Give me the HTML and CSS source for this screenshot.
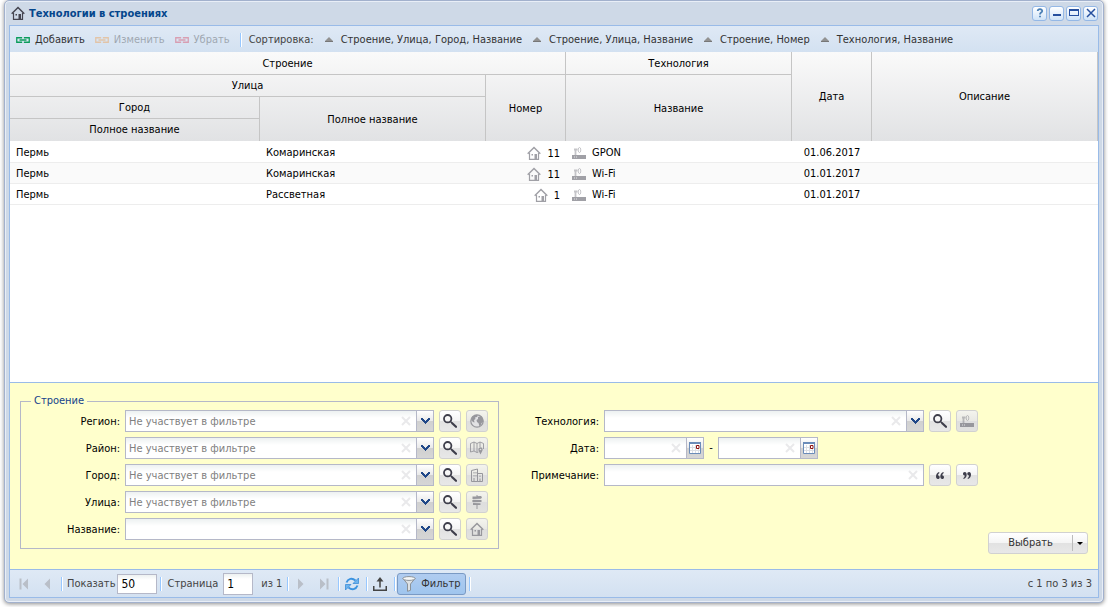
FILE: index.html
```html
<!DOCTYPE html>
<html lang="ru">
<head>
<meta charset="utf-8">
<title>Технологии в строениях</title>
<link rel="stylesheet" href="styles.css">
</head>
<body>
<svg class="sprite" aria-hidden="true">
  <symbol id="house" viewBox="0 0 14 14"><path d="M.7 7.700 7 1.500l6.300 6.200" fill="none" stroke="currentColor" stroke-width="1.500"/><path d="M2.500 7v6.400h9V7" fill="none" stroke="currentColor" stroke-width="1.200"/><path d="M7.500 8h2.500v5H7.500zM4.500 8H6v1.500H4.500z" fill="currentColor"/></symbol>
  <symbol id="link" viewBox="0 0 14 6"><path d="M5.500 1.500V.750H.750v4.500H5.500V4.500M8.500 1.500V.750h4.750v4.500H8.500V4.500M3.500 3h7" fill="none" stroke="currentColor" stroke-width="1.300"/></symbol>
  <symbol id="router" viewBox="0 0 14 12"><path d="M0 8h14v4H0z" fill="currentColor"/><path d="M2 2.500h3.500M3.500 2.500V8" stroke="currentColor" stroke-width="1.800" opacity=".6"/><ellipse cx="7.500" cy="3" rx="1.300" ry="2.500" fill="none" stroke="currentColor" opacity=".6"/><path d="M2 10h1M4 10h1" stroke="#fff" opacity=".7"/></symbol>
  <symbol id="search" viewBox="0 0 14 14"><circle cx="4.700" cy="4.700" r="3.700" fill="none" stroke="currentColor" stroke-width="1.800"/><path d="m7.500 7.500 2 2" stroke="currentColor" stroke-width="1.500"/><path d="m9.500 9.500 3.500 3.300" stroke="currentColor" stroke-width="2.200" stroke-linecap="round"/></symbol>
  <symbol id="globe" viewBox="0 0 14 14"><circle cx="7" cy="7" r="6.200" fill="#e2e2e4" stroke="currentColor" stroke-width="1.200"/><path d="M1 6 2.500 2.500 6 .800l2 .700L7 3 5 3.500 5.500 5 4 6l.500 2.500L3 8zM8 3l3-1 2 3 .300 3-1.800 1-.5 2-1.500 1.500L8.500 9 7 8l-.5-2L8 5z" fill="currentColor"/></symbol>
  <symbol id="map" viewBox="0 0 14 14"><path d="M.500 2.500 4 1l3 1.500L10 1l3.500 1.500V8M.500 2.500V11L4 10l3 1.500 1.500-.5M4 1v9M7 2.500v9M10 1v5" fill="none" stroke="currentColor" stroke-width=".9"/><circle cx="10.500" cy="8.500" r="1.500" fill="none" stroke="currentColor" stroke-width="1.300"/><path d="M8.500 9.500h4l-2 4z" fill="currentColor"/></symbol>
  <symbol id="city" viewBox="0 0 14 14"><path d="M1.500 13.500V2.500L7.500 1v12.500zM7.500 5.500h5v8h-5z" fill="none" stroke="currentColor"/><path d="M3.500 4h1v1.500h-1zM5.500 4h1v1.500h-1zM3.500 7h1v1.500h-1zM5.500 7h1v1.500h-1zM3.500 10h1v3.500h-1zM9.500 7.500h1V9h-1zM9.500 10.500h1v3h-1z" fill="currentColor"/></symbol>
  <symbol id="signpost" viewBox="0 0 14 14"><path d="M6.500 0h1v1.500h-1zM6.500 9.500h1V14h-1zM2.500 1.500 11 1l1 1.200-1 1.500-8.500.300zM3 4.800l8.500.200v2L3 7.300 2 6zM3 8l7 .200 1 .900-1 1H3z" fill="currentColor"/></symbol>
  <symbol id="cross" viewBox="0 0 10 10"><path d="m1 1 8 8m0-8-8 8" stroke="currentColor" stroke-width="2"/></symbol>
  <symbol id="chevron" viewBox="0 0 9 6"><path d="M0 0h2v1h1v1h1v1h1V2h1V1h1V0h2v2H8v1H7v1H6v1H5v1H4V5H3V4H2V3H1V2H0z" fill="currentColor"/></symbol>
  <symbol id="calendar" viewBox="0 0 12 12"><path d="M.500.500h11v11H.500z" fill="#fff" stroke="#6b8cb9"/><path d="M0 0h12v2H0z" fill="#6b8cb9"/><path d="M3.500 3v8M6.500 3v8M9.500 7v4M1 5.500h6M1 8.500h10" stroke="#dcdfe5"/><path d="M7.500 3.500h2.500v3H7.500z" fill="#fff" stroke="#8c1010"/></symbol>
  <symbol id="triangle" viewBox="0 0 8 5"><path d="M4 0 8 4v1H0V4z" fill="#929292"/><path d="M0 4h8v1H0z" fill="#777"/></symbol>
  <symbol id="prev" viewBox="0 0 8 12"><path d="M7 .500v11L1.500 6z" fill="#b9bfc8"/></symbol>
  <symbol id="next" viewBox="0 0 8 12"><path d="M1 .500v11L6.500 6z" fill="#b9bfc8"/></symbol>
  <symbol id="first" viewBox="0 0 12 12"><path d="M1.500 .500h2v11h-2zM10 .500v11L4.500 6z" fill="#b9bfc8"/></symbol>
  <symbol id="last" viewBox="0 0 12 12"><path d="M8.500 .500h2v11h-2zM2 .500v11L7.500 6z" fill="#b9bfc8"/></symbol>
  <symbol id="refresh" viewBox="0 0 14 14"><path d="M1.500 5.500C3 1.500 7 .500 10.500 3.500M12.500 8.500C11 12.500 7 13.500 3.500 10.500" fill="none" stroke="#3b93e0" stroke-width="2"/><path d="M13.500 1v5.500H8zM.500 13V7.500H6z" fill="#6db4ef" stroke="#2f84d2" stroke-width=".7"/></symbol>
  <symbol id="upload" viewBox="0 0 14 14"><path d="M.750 9v4.250h12.500V9M7 10.500V3" fill="none" stroke="currentColor" stroke-width="1.500"/><path d="M7 0l3.500 4.500h-7z" fill="currentColor"/></symbol>
  <symbol id="funnel" viewBox="0 0 14 16"><path d="M1 2.500 5.500 8v7.300l3-1V8L13 2.500z" fill="#dde1e4" stroke="#8b9298"/><ellipse cx="7" cy="2.500" rx="6.200" ry="1.900" fill="#f5f7f8" stroke="#8b9298"/></symbol>
  <symbol id="quote-open" viewBox="0 0 8 7"><path d="M3 0C1 .900 0 2.400 0 4.500 0 6 .700 7 1.900 7s1.800-.800 1.800-1.800S3 3.600 2 3.600C2 2.300 2.500 1.500 3.500.900zM7.300 0c-2 .900-3 2.400-3 4.500C4.300 6 5 7 6.200 7S8 6.200 8 5.200s-.700-1.600-1.700-1.600c0-1.300.5-2.100 1.500-2.700z" fill="currentColor"/></symbol>
  <symbol id="quote-close" viewBox="0 0 8 7"><path d="M5 7c2-.900 3-2.400 3-4.500C8 1 7.300 0 6.100 0S4.300.800 4.300 1.800 5 3.400 6 3.400c0 1.300-.5 2.100-1.500 2.700zM.700 7c2-.900 3-2.400 3-4.500C3.700 1 3 0 1.800 0S0 .800 0 1.800s.700 1.600 1.700 1.600c0 1.300-.5 2.100-1.500 2.700z" fill="currentColor"/></symbol>
</svg>

<main class="window">
  <header class="titlebar">
    <svg class="icon-14 title-icon"><use href="#house"/></svg>
    <h1>Технологии в строениях</h1>
    <div class="tools">
      <button class="tool" aria-label="Справка"><svg viewBox="0 0 10 10"><path d="M2.700 3C3 .500 7.300.700 7.200 3 7.100 4.700 5 4.500 5 6.500M5 7.700v1.600" fill="none" stroke="#4a7fb5" stroke-width="1.800"/></svg></button>
      <button class="tool" aria-label="Свернуть"><svg viewBox="0 0 10 10"><path d="M1 6h8v2H1z" fill="#264f9e"/></svg></button>
      <button class="tool" aria-label="Развернуть"><svg viewBox="0 0 10 10"><path d="M0 1h10v7H0zM1 3v4h8V3z" fill="#264f9e" fill-rule="evenodd"/></svg></button>
      <button class="tool" aria-label="Закрыть"><svg viewBox="0 0 10 10"><path d="m1 1 8 8m0-8-8 8" stroke="#264f9e" stroke-width="1.500"/></svg></button>
    </div>
  </header>

  <div class="panel">
    <div class="toolbar">
      <button class="action add"><svg class="link-icon"><use href="#link"/></svg>Добавить</button>
      <button class="action edit" disabled><svg class="link-icon"><use href="#link"/></svg>Изменить</button>
      <button class="action remove" disabled><svg class="link-icon"><use href="#link"/></svg>Убрать</button>
      <span class="separator"></span>
      <span class="sort-label">Сортировка:</span>
      <button class="sort"><svg class="tri"><use href="#triangle"/></svg>Строение, Улица, Город, Название</button>
      <button class="sort"><svg class="tri"><use href="#triangle"/></svg>Строение, Улица, Название</button>
      <button class="sort"><svg class="tri"><use href="#triangle"/></svg>Строение, Номер</button>
      <button class="sort"><svg class="tri"><use href="#triangle"/></svg>Технология, Название</button>
    </div>

    <div class="grid-body">
      <table class="grid">
        <colgroup><col class="c-city"><col class="c-street"><col class="c-number"><col class="c-tech"><col class="c-date"><col></colgroup>
        <thead>
          <tr><th colspan="3">Строение</th><th>Технология</th><th rowspan="4" class="last-row">Дата</th><th rowspan="4" class="last-row">Описание</th></tr>
          <tr><th colspan="2">Улица</th><th rowspan="3" class="last-row">Номер</th><th rowspan="3" class="last-row">Название</th></tr>
          <tr><th>Город</th><th rowspan="2" class="last-row">Полное название</th></tr>
          <tr><th class="bottom-cell">Полное название</th></tr>
        </thead>
        <tbody>
          <tr><td>Пермь</td><td>Комаринская</td><td class="num"><svg class="icon-14"><use href="#house"/></svg>11</td><td><svg class="icon-router"><use href="#router"/></svg>GPON</td><td class="date">01.06.2017</td><td></td></tr>
          <tr><td>Пермь</td><td>Комаринская</td><td class="num"><svg class="icon-14"><use href="#house"/></svg>11</td><td><svg class="icon-router"><use href="#router"/></svg>Wi-Fi</td><td class="date">01.01.2017</td><td></td></tr>
          <tr><td>Пермь</td><td>Рассветная</td><td class="num"><svg class="icon-14"><use href="#house"/></svg>1</td><td><svg class="icon-router"><use href="#router"/></svg>Wi-Fi</td><td class="date">01.01.2017</td><td></td></tr>
        </tbody>
      </table>
    </div>

    <form class="filter" onsubmit="return false">
      <fieldset class="building">
        <legend>Строение</legend>
        <label for="region">Регион:</label>
        <div class="field"><input id="region" type="text" placeholder="Не участвует в фильтре"><button type="button" class="clear" aria-label="Очистить"><svg><use href="#cross"/></svg></button><button type="button" class="trigger" aria-label="Открыть список"><svg class="chev"><use href="#chevron"/></svg></button></div>
        <button type="button" class="square" aria-label="Найти"><svg class="icon-14"><use href="#search"/></svg></button>
        <button type="button" class="square" disabled aria-label="Регион"><svg class="icon-14"><use href="#globe"/></svg></button>

        <label for="district">Район:</label>
        <div class="field"><input id="district" type="text" placeholder="Не участвует в фильтре"><button type="button" class="clear" aria-label="Очистить"><svg><use href="#cross"/></svg></button><button type="button" class="trigger" aria-label="Открыть список"><svg class="chev"><use href="#chevron"/></svg></button></div>
        <button type="button" class="square" aria-label="Найти"><svg class="icon-14"><use href="#search"/></svg></button>
        <button type="button" class="square" disabled aria-label="Район"><svg class="icon-14"><use href="#map"/></svg></button>

        <label for="city-name">Город:</label>
        <div class="field"><input id="city-name" type="text" placeholder="Не участвует в фильтре"><button type="button" class="clear" aria-label="Очистить"><svg><use href="#cross"/></svg></button><button type="button" class="trigger" aria-label="Открыть список"><svg class="chev"><use href="#chevron"/></svg></button></div>
        <button type="button" class="square" aria-label="Найти"><svg class="icon-14"><use href="#search"/></svg></button>
        <button type="button" class="square" disabled aria-label="Город"><svg class="icon-14"><use href="#city"/></svg></button>

        <label for="street">Улица:</label>
        <div class="field"><input id="street" type="text" placeholder="Не участвует в фильтре"><button type="button" class="clear" aria-label="Очистить"><svg><use href="#cross"/></svg></button><button type="button" class="trigger" aria-label="Открыть список"><svg class="chev"><use href="#chevron"/></svg></button></div>
        <button type="button" class="square" aria-label="Найти"><svg class="icon-14"><use href="#search"/></svg></button>
        <button type="button" class="square" disabled aria-label="Улица"><svg class="icon-14"><use href="#signpost"/></svg></button>

        <label for="title">Название:</label>
        <div class="field"><input id="title" type="text"><button type="button" class="clear" aria-label="Очистить"><svg><use href="#cross"/></svg></button><button type="button" class="trigger" aria-label="Открыть список"><svg class="chev"><use href="#chevron"/></svg></button></div>
        <button type="button" class="square" aria-label="Найти"><svg class="icon-14"><use href="#search"/></svg></button>
        <button type="button" class="square" disabled aria-label="Строение"><svg class="icon-14"><use href="#house"/></svg></button>
      </fieldset>

      <div class="details">
        <label for="tech">Технология:</label>
        <div class="field"><input id="tech" type="text"><button type="button" class="clear" aria-label="Очистить"><svg><use href="#cross"/></svg></button><button type="button" class="trigger" aria-label="Открыть список"><svg class="chev"><use href="#chevron"/></svg></button></div>
        <button type="button" class="square" aria-label="Найти"><svg class="icon-14"><use href="#search"/></svg></button>
        <button type="button" class="square" disabled aria-label="Технология"><svg class="icon-router"><use href="#router"/></svg></button>

        <label for="date-from">Дата:</label>
        <div class="dates">
          <div class="field"><input id="date-from" type="text"><button type="button" class="clear" aria-label="Очистить"><svg><use href="#cross"/></svg></button><button type="button" class="trigger" aria-label="Календарь"><svg class="cal"><use href="#calendar"/></svg></button></div>
          <span>-</span>
          <div class="field"><input type="text" aria-label="Дата по"><button type="button" class="clear" aria-label="Очистить"><svg><use href="#cross"/></svg></button><button type="button" class="trigger" aria-label="Календарь"><svg class="cal"><use href="#calendar"/></svg></button></div>
        </div>

        <label for="note">Примечание:</label>
        <div class="field"><input id="note" type="text"><button type="button" class="clear" aria-label="Очистить"><svg><use href="#cross"/></svg></button></div>
        <button type="button" class="square" aria-label="Начинается с"><svg class="quote"><use href="#quote-open"/></svg></button>
        <button type="button" class="square" aria-label="Заканчивается на"><svg class="quote"><use href="#quote-close"/></svg></button>
      </div>

      <div class="split">
        <button type="button" class="choose">Выбрать</button>
        <button type="button" class="more" aria-label="Ещё"></button>
      </div>
    </form>

    <footer class="paging">
      <button class="pager" disabled aria-label="Первая страница"><svg class="p-wide"><use href="#first"/></svg></button>
      <button class="pager" disabled aria-label="Предыдущая страница"><svg class="p-narrow"><use href="#prev"/></svg></button>
      <span class="separator"></span>
      <label class="size-label" for="size">Показать</label>
      <input class="size" id="size" type="text" value="50">
      <span class="separator"></span>
      <label class="page-label" for="page">Страница</label>
      <input class="page" id="page" type="text" value="1">
      <span class="total">из 1</span>
      <span class="separator"></span>
      <button class="pager" disabled aria-label="Следующая страница"><svg class="p-narrow"><use href="#next"/></svg></button>
      <button class="pager" disabled aria-label="Последняя страница"><svg class="p-wide"><use href="#last"/></svg></button>
      <span class="separator"></span>
      <button class="pager" aria-label="Обновить"><svg class="icon-14"><use href="#refresh"/></svg></button>
      <span class="separator"></span>
      <button class="pager" aria-label="Выгрузить"><svg class="icon-14"><use href="#upload"/></svg></button>
      <span class="separator"></span>
      <button class="toggle" aria-pressed="true"><svg class="funnel"><use href="#funnel"/></svg>Фильтр</button>
      <span class="separator"></span>
      <span class="range">с 1 по 3 из 3</span>
    </footer>
  </div>
</main>
</body>
</html>
```

FILE: styles.css
```css
* { box-sizing: border-box; }
body {
  display: flex;
  min-height: 100vh;
  margin: 0;
  padding: 0 4px 4px;
  background: #fff;
  color: #000;
  font: 11px/14px "DejaVu Sans Condensed", "Noto Sans", sans-serif;
}
button, input { font: inherit; color: inherit; }
button { margin: 0; padding: 0; border: 0; background: none; }
svg { display: block; flex: none; }
.sprite { position: absolute; width: 0; height: 0; }
.icon-14 { width: 14px; height: 14px; }
.icon-router { width: 14px; height: 12px; }

.window {
  display: flex;
  flex: 1;
  flex-direction: column;
  min-width: 0;
  padding: 0 4px 4px;
  border: 1px solid #a2b1cd;
  border-radius: 5px;
  background: #ced9e7;
  box-shadow: inset 0 0 0 1px #e8eef7, 0 1px 4px rgba(0, 0, 0, .45);
}
.titlebar { display: flex; align-items: center; height: 24px; padding: 0 1px 0 2px; }
.title-icon { color: #44444f; }
h1 { margin: 0 0 0 4px; padding-top: 1px; color: #04468c; font-size: 11px; font-weight: bold; }
.tools { display: flex; gap: 2px; margin-left: auto; }
.tool {
  display: flex;
  align-items: center;
  justify-content: center;
  width: 15px;
  height: 15px;
  border: 1px solid #94b8e6;
  border-radius: 3px;
  background: linear-gradient(#fff, #cfe3f8);
}
.tool svg { width: 10px; height: 10px; }

.panel {
  display: flex;
  flex: 1;
  flex-direction: column;
  border: 1px solid #99bbe8;
  background: #fff;
}
.toolbar, .paging {
  display: flex;
  align-items: center;
  background: linear-gradient(#dfe9f5, #d3e1f1);
  color: #333;
}
.toolbar { height: 26px; padding: 1px 0 0 6px; }
.action { display: flex; align-items: center; gap: 5px; margin-right: 10px; }
.action:disabled { color: #333; opacity: .35; }
.link-icon { width: 14px; height: 6px; }
.add .link-icon { color: #0b9c5b; }
.edit .link-icon { color: #f58a1f; }
.remove .link-icon { color: #d81e3c; }
.separator {
  width: 2px;
  height: 14px;
  border-left: 1px solid #98c8ff;
  border-right: 1px solid #fff;
}
.sort-label { margin: 0 11px 0 7px; color: #444; }
.sort { display: flex; align-items: center; gap: 8px; margin-right: 11px; }
.tri { width: 8px; height: 5px; }

.grid-body { flex: 1; }
.grid { width: 100%; border-spacing: 0; table-layout: fixed; }
.c-city { width: 250px; }
.c-street, .c-tech { width: 226px; }
.c-number, .c-date { width: 80px; }
.grid thead { background: linear-gradient(#fafafa, #e1e2e4); }
.grid th {
  height: 22px;
  padding: 0;
  border-right: 1px solid #c5c5c5;
  border-bottom: 1px solid #c5c5c5;
  font-weight: normal;
}
.grid tr:first-child th { height: 23px; padding-top: 1px; }
.grid .last-row { padding-top: 2px; border-bottom: 0; }
.grid .bottom-cell { border-bottom: 0; }
.grid td { height: 21px; padding: 2px 6px 0; border-bottom: 1px solid #ededed; white-space: nowrap; }
.grid tbody tr:first-child td { height: 22px; padding-top: 3px; }
.grid tbody tr:nth-child(even) { background: #fafafa; }
.grid td svg { display: inline-block; margin-right: 6px; color: #a0a0a6; vertical-align: text-bottom; }
.grid .num { text-align: right; }
.grid .date { text-align: center; }

.filter {
  display: flex;
  padding: 11px 10px 15px;
  border-top: 1px solid #99bbe8;
  background: #ffffcc;
}
.building {
  flex: 0 1 479px;
  min-width: 0;
  margin: 0 0 5px;
  padding: 2px 10px 8px 0;
  border: 1px solid #b5b8c8;
}
.building, .details {
  display: grid;
  grid-template-columns: 99px minmax(0, 1fr) 22px 22px;
  gap: 5px;
}
.building legend { margin-left: 10px; padding: 0 3px; color: #15428b; }
.details { flex: 0 1 478px; align-content: start; margin: 16px 0 0 1px; }
.filter label { align-self: center; padding-top: 1px; text-align: right; }
.field {
  display: flex;
  align-items: center;
  height: 22px;
  border: 1px solid #b5b8c8;
  background: linear-gradient(#edf1f1, #fff 7px);
}
.field input {
  flex: 1;
  min-width: 0;
  height: 20px;
  padding: 0 3px;
  border: 0;
  outline: 0;
  background: transparent;
}
.field input::placeholder { color: #808080; opacity: 1; }
.clear { width: 10px; margin-right: 5px; color: #e9e9eb; }
.clear svg { width: 10px; height: 10px; }
.trigger {
  display: flex;
  align-items: center;
  justify-content: center;
  width: 17px;
  height: 20px;
  border-left: 1px solid #b5b8c8;
  background: linear-gradient(#fff, #e9e9e9 50%, #d0d0d0 50%, #d6d6d6);
  color: #1f4788;
}
.chev { width: 9px; height: 6px; }
.cal { width: 12px; height: 12px; }
.square, .split {
  display: flex;
  align-items: center;
  justify-content: center;
  height: 22px;
  border: 1px solid #d1d1d1;
  border-radius: 3px;
  background: linear-gradient(#fff, #f5f5f5 48%, #e2e2e2 52%, #e8e8e8);
  color: #3e3e4b;
}
.square:disabled { color: #97979c; background: linear-gradient(#f4f4ed, #e9e9e4 48%, #dedede 52%, #e2e2df); }
.quote { width: 8px; height: 7px; }
.dates { display: flex; align-items: center; grid-column: 2 / -1; }
.dates .field { width: 100px; }
.dates span { width: 14px; text-align: center; }
.split { width: 100px; margin-left: auto; align-self: flex-end; color: #333; }
.choose { flex: 1; }
.more { display: flex; align-items: center; justify-content: center; width: 15px; height: 16px; border-left: 1px solid #bbb; }
.more::after { content: ""; border: 3px solid transparent; border-top-color: #000; border-bottom: 0; }

.paging { height: 28px; padding: 0 6px 0 2px; border-top: 1px solid #99bbe8; color: #444; }
.paging .separator { margin-left: 3px; }
.pager { display: flex; align-items: center; justify-content: center; width: 23px; height: 22px; }
.p-wide { width: 12px; height: 12px; }
.p-narrow { width: 8px; height: 12px; }
.size, .page {
  padding: 0 3px;
  border: 1px solid #b5b8c8;
  background: linear-gradient(#edf1f1, #fff 5px);
  color: #000;
  font-size: 12px;
}
.size { width: 40px; height: 20px; margin-left: 2px; }
.page { width: 30px; height: 22px; }
.size-label { margin-left: 4px; }
.page-label { margin: 0 5px; }
.total { margin: 0 2px 0 8px; }
.toggle {
  display: flex;
  align-items: center;
  justify-content: center;
  gap: 5px;
  height: 22px;
  margin-left: 1px;
  padding: 0 4px;
  border: 1px solid #7a9ac4;
  border-radius: 3px;
  background: linear-gradient(#b0ccf0, #9fc5ee);
  color: #333;
}
.funnel { width: 14px; height: 16px; }
.range { margin-left: auto; }
```
